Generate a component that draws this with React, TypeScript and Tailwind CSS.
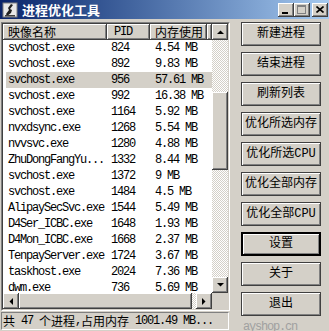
import React from "react";

const rows: [string, string, string][] = [
  ["svchost.exe", "824", "4.54 MB"],
  ["svchost.exe", "892", "9.83 MB"],
  ["svchost.exe", "956", "57.61 MB"],
  ["svchost.exe", "992", "16.38 MB"],
  ["svchost.exe", "1164", "5.92 MB"],
  ["nvxdsync.exe", "1268", "5.54 MB"],
  ["nvvsvc.exe", "1280", "4.88 MB"],
  ["ZhuDongFangYu...", "1332", "8.44 MB"],
  ["svchost.exe", "1372", "9 MB"],
  ["svchost.exe", "1484", "4.5 MB"],
  ["AlipaySecSvc.exe", "1544", "5.49 MB"],
  ["D4Ser_ICBC.exe", "1648", "1.93 MB"],
  ["D4Mon_ICBC.exe", "1668", "2.37 MB"],
  ["TenpayServer.exe", "1724", "3.67 MB"],
  ["taskhost.exe", "2024", "7.36 MB"],
  ["dwm.exe", "736", "5.69 MB"],
];

const buttons = [
  "新建进程",
  "结束进程",
  "刷新列表",
  "优化所选内存",
  "优化所选CPU",
  "优化全部内存",
  "优化全部CPU",
  "设置",
  "关于",
  "退出",
];

const raised =
  "bg-[#d4d0c8] shadow-[inset_-1px_-1px_#404040,inset_1px_1px_#ffffff,inset_-2px_-2px_#808080,inset_2px_2px_#d4d0c8]";
const checker =
  "bg-[repeating-conic-gradient(#ffffff_0_25%,#d4d0c8_0_50%)] bg-[length:2px_2px]";
const mono = "font-['Liberation_Mono','Noto_Sans_CJK_SC',monospace]";
const cjk = "font-['Noto_Sans_CJK_SC',sans-serif]";

function Arrow({ dir }: { dir: "up" | "down" | "left" | "right" }) {
  const pts =
    dir === "up"
      ? "0,4 7,4 3.5,0.5"
      : dir === "down"
      ? "0,0 7,0 3.5,3.5"
      : dir === "left"
      ? "4,0 4,7 0.5,3.5"
      : "0,0 0,7 3.5,3.5";
  const w = dir === "up" || dir === "down" ? 7 : 4;
  const h = dir === "up" || dir === "down" ? 4 : 7;
  return (
    <div className={`w-[16px] h-[16px] flex items-center justify-center shrink-0 ${raised}`}>
      <svg width={w} height={h} viewBox={`0 0 ${w} ${h}`}>
        <polygon points={pts} fill="#000" />
      </svg>
    </div>
  );
}

function Status() {
  return (
    <div className="flex items-center h-[18px] w-[228px] border-t border-l border-t-[#808080] border-l-[#808080] border-b border-r border-b-white border-r-white pl-[1px] text-black overflow-hidden whitespace-nowrap">
      <span className={`${cjk} text-[12px] leading-[16px]`}>共</span>
      <span className={`${mono} text-[12px] tracking-[-1.2px] leading-[16px]`}>&nbsp;47&nbsp;</span>
      <span className={`${cjk} text-[12px] leading-[16px]`}>个进程</span>
      <span className={`${mono} text-[12px] tracking-[-1.2px] leading-[16px]`}>,</span>
      <span className={`${cjk} text-[12px] leading-[16px]`}>占用内存</span>
      <span className={`${mono} text-[12px] tracking-[-1.2px] leading-[16px]`}>&nbsp;1001.49 MB...</span>
    </div>
  );
}

export default function App() {
  return (
    <div className="w-[329px] h-[331px] bg-[#d4d0c8] overflow-hidden flex flex-col select-none">
      {/* Title bar */}
      <div className="h-[19px] flex items-center bg-gradient-to-r from-[#0a246a] to-[#a6caf0] shrink-0">
        <div className="ml-[2px] w-[16px] h-[16px]">
          <svg width="16" height="16" viewBox="0 0 16 16">
            <rect x="1" y="1" width="14" height="14" fill="#e8e8e8" stroke="#808080" strokeWidth="1" />
            <path d="M9 2 L6 6 L7 8 L4 12 L5 14 L9 11 L10 8 L8 7 L11 3 Z" fill="#202020" />
            <rect x="3" y="13" width="10" height="1.5" fill="#404040" />
          </svg>
        </div>
        <span className={`${cjk} ml-[4px] text-white font-bold text-[13px] leading-[16px]`}>
          进程优化工具
        </span>
        <div className="ml-auto mr-[1px] flex items-center">
          <div className={`w-[16px] h-[14px] relative ${raised}`}>
            <div className="absolute left-[4px] top-[9px] w-[6px] h-[2px] bg-black" />
          </div>
          <div className={`w-[16px] h-[14px] relative ${raised}`}>
            <div className="absolute left-[3px] top-[2px] w-[9px] h-[9px] border border-[#808080] border-t-2" />
          </div>
          <div className={`ml-[2px] w-[16px] h-[14px] flex items-center justify-center ${raised}`}>
            <svg width="8" height="7" viewBox="0 0 8 7">
              <path d="M0.5 0.5 L7.5 6.5 M7.5 0.5 L0.5 6.5" stroke="#000" strokeWidth="1.6" />
            </svg>
          </div>
        </div>
      </div>

      {/* Body */}
      <div className="flex flex-row pt-[3px] pl-[1px]">
        {/* Left column */}
        <div className="flex flex-col w-[229px]">
          <div className="w-[229px] h-[289px] border-t border-l border-t-[#808080] border-l-[#808080] border-b border-r border-b-white border-r-white">
            <div className="w-full h-full border-t border-l border-t-[#404040] border-l-[#404040] border-b border-r border-b-[#d4d0c8] border-r-[#d4d0c8] bg-white flex flex-col">
              <div className="flex flex-row h-[269px]">
                {/* main list */}
                <div className="w-[209px] flex flex-col overflow-hidden">
                  <div className="flex flex-row h-[16px] shrink-0 text-black">
                    <div className={`w-[104px] pl-[5px] flex items-center ${raised} ${cjk} text-[12px] leading-[14px]`}>
                      映像名称
                    </div>
                    <div className={`w-[43px] pl-[7px] flex items-center ${raised} ${mono} text-[12px] tracking-[-1.2px] leading-[14px]`}>
                      PID
                    </div>
                    <div className={`w-[57px] pl-[5px] flex items-center ${raised} ${cjk} text-[12px] leading-[14px] whitespace-nowrap`}>
                      内存使用
                    </div>
                    <div className={`flex-1 ${raised}`} />
                  </div>
                  <div className="flex-1 overflow-hidden">
                    {rows.map((r, i) => (
                      <div
                        key={i}
                        className={`flex flex-row h-[16px] items-center ml-[3px] w-[206px] whitespace-nowrap ${mono} text-[12px] tracking-[-1.2px] text-black ${
                          i === 2 ? "bg-[#d4d0c8]" : ""
                        }`}
                      >
                        <div className="w-[101px] pl-[2px]">{r[0]}</div>
                        <div className="w-[43px] pl-[4px]">{r[1]}</div>
                        <div className="pl-[5px]">{r[2]}</div>
                      </div>
                    ))}
                  </div>
                </div>
                {/* vertical scrollbar */}
                <div className="w-[16px] flex flex-col">
                  <Arrow dir="up" />
                  <div className={`h-[52px] ${checker}`} />
                  <div className={`h-[78px] ${raised}`} />
                  <div className={`flex-1 ${checker}`} />
                  <Arrow dir="down" />
                </div>
              </div>
              {/* horizontal scrollbar */}
              <div className="flex flex-row h-[16px]">
                <Arrow dir="left" />
                <div className={`w-[173px] ${raised}`} />
                <div className={`w-[4px] ${checker}`} />
                <Arrow dir="right" />
                <div className="w-[16px] bg-[#d4d0c8]" />
              </div>
            </div>
          </div>
          <div className="mt-[1px]">
            <Status />
          </div>
        </div>

        {/* Right column */}
        <div className="ml-[11px] w-[80px] flex flex-col gap-[6px]">
          {buttons.map((b, i) => (
            <div
              key={b}
              className={`h-[24px] flex items-center justify-center text-black text-[12px] leading-[14px] ${mono} ${
                i === 7
                  ? "border-2 border-black shadow-[inset_1px_1px_#ffffff,inset_-1px_-1px_#808080]"
                  : "border border-[#404040] shadow-[inset_1px_1px_#ffffff,inset_-1px_-1px_#808080]"
              } bg-[#d4d0c8] whitespace-nowrap`}
            >
              {b}
            </div>
          ))}
          <div className={`mt-[-2px] ml-[2px] text-[12px] tracking-[-1.2px] leading-[14px] text-[#a0a0a0] ${mono}`}>
            ayshop.cn
          </div>
        </div>
      </div>
    </div>
  );
}
